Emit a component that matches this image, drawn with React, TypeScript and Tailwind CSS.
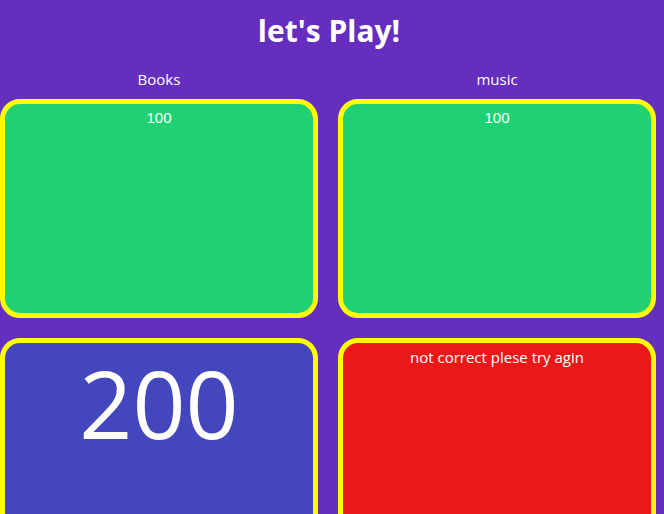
export default function App() {
  const font = { fontFamily: '"Open Sans", "DejaVu Sans", sans-serif' };
  return (
    <div className="w-[664px] h-[514px] overflow-hidden bg-[#652ebf] text-white" style={font}>
      <div className="w-[658px]">
        <div className="h-[60px] flex items-center justify-center text-[30px] font-bold">let's Play!</div>
        <div className="grid grid-cols-[318px_318px] gap-x-[20px]">
          <div className="h-[39px] flex items-center justify-center text-[15px]">Books</div>
          <div className="h-[39px] flex items-center justify-center text-[15px]">music</div>
        </div>
        <div className="grid grid-cols-[318px_318px] gap-[20px]">
          <div className="h-[219px] rounded-[20px] border-[5px] border-[#ffff00] bg-[#1fd173] flex justify-center pt-[5px] text-[15px] leading-[18px]" style={{ fontFamily: '"Liberation Sans", Arial, sans-serif' }}>100</div>
          <div className="h-[219px] rounded-[20px] border-[5px] border-[#ffff00] bg-[#1fd173] flex justify-center pt-[5px] text-[15px] leading-[18px]" style={{ fontFamily: '"Liberation Sans", Arial, sans-serif' }}>100</div>
          <div className="h-[219px] rounded-[20px] border-[5px] border-[#ffff00] bg-[#4446bd] flex justify-center text-[93px] leading-[1] pt-[14px] font-medium">200</div>
          <div className="h-[219px] rounded-[20px] border-[5px] border-[#ffff00] bg-[#ec1818] flex justify-center pt-[5px] text-[15px] leading-[18px]">not correct plese try agin</div>
        </div>
      </div>
    </div>
  );
}
